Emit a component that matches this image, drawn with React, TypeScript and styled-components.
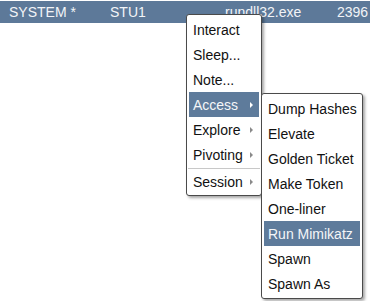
import styled, { createGlobalStyle } from "styled-components";

const GlobalStyle = createGlobalStyle`
  html, body {
    margin: 0;
    padding: 0;
    background: #ffffff;
  }
  body {
    font-family: "Liberation Sans", Arial, sans-serif;
    font-size: 14px;
  }
`;

interface MenuEntry {
  label: string;
  submenu?: boolean;
  active?: boolean;
  separatorBefore?: boolean;
}

const MAIN_MENU: MenuEntry[] = [
  { label: "Interact" },
  { label: "Sleep..." },
  { label: "Note..." },
  { label: "Access", submenu: true, active: true },
  { label: "Explore", submenu: true },
  { label: "Pivoting", submenu: true },
  { label: "Session", submenu: true, separatorBefore: true },
];

const ACCESS_MENU: MenuEntry[] = [
  { label: "Dump Hashes" },
  { label: "Elevate" },
  { label: "Golden Ticket" },
  { label: "Make Token" },
  { label: "One-liner" },
  { label: "Run Mimikatz", active: true },
  { label: "Spawn" },
  { label: "Spawn As" },
];

function MenuItems({ items }: { items: MenuEntry[] }) {
  return (
    <>
      {items.map((item) => (
        <div key={item.label}>
          {item.separatorBefore && <Separator />}
          <Item $active={item.active}>
            <span>{item.label}</span>
            {item.submenu && <Arrow $active={item.active} />}
          </Item>
        </div>
      ))}
    </>
  );
}

function App() {
  return (
    <Page>
      <GlobalStyle />
      <SessionRow>
        <Cell>SYSTEM *</Cell>
        <Cell>STU1</Cell>
        <Cell>rundll32.exe</Cell>
        <Cell>2396</Cell>
      </SessionRow>

      <MainMenu>
        <MenuItems items={MAIN_MENU} />
      </MainMenu>

      <SubMenu>
        <MenuItems items={ACCESS_MENU} />
      </SubMenu>
    </Page>
  );
}

const Page = styled.div`
  position: relative;
  width: 372px;
  height: 301px;
  padding-top: 1px;
  box-sizing: border-box;
  overflow: hidden;
`;

const SessionRow = styled.div`
  display: grid;
  grid-template-columns: 101px 115px 112px 1fr;
  align-items: center;
  width: 370px;
  height: 22px;
  padding-left: 9px;
  box-sizing: border-box;
  background: #5d7999;
  color: #f2f4f7;
  font-size: 14px;
`;

const Cell = styled.span`
  white-space: nowrap;
`;

const Menu = styled.div`
  position: absolute;
  box-sizing: border-box;
  background: #ffffff;
  border: 1px solid #4a4a4a;
  border-radius: 3px;
  padding: 2px;
  box-shadow: 2px 2px 3px rgba(0, 0, 0, 0.35);
  color: #111111;
  font-size: 14px;
`;

const MainMenu = styled(Menu)`
  left: 186px;
  top: 14px;
  width: 76px;
  padding-bottom: 1px;
`;

const SubMenu = styled(Menu)`
  left: 261px;
  top: 93px;
  width: 102px;
  z-index: 2;
`;

const Item = styled.div<{ $active?: boolean }>`
  display: flex;
  align-items: center;
  justify-content: space-between;
  height: 25px;
  padding: 0 6px 0 4px;
  background: ${(p) => (p.$active ? "#5e7b9b" : "transparent")};
  color: ${(p) => (p.$active ? "#f4f6f8" : "#111111")};
  white-space: nowrap;
`;

const Arrow = styled.span<{ $active?: boolean }>`
  width: 0;
  height: 0;
  border-top: 3px solid transparent;
  border-bottom: 3px solid transparent;
  border-left: 3px solid ${(p) => (p.$active ? "#ffffff" : "#8a8a8a")};
`;

const Separator = styled.div`
  height: 1px;
  margin: 1px -1px 0;
  background: #c8c8c8;
`;

export default App;
